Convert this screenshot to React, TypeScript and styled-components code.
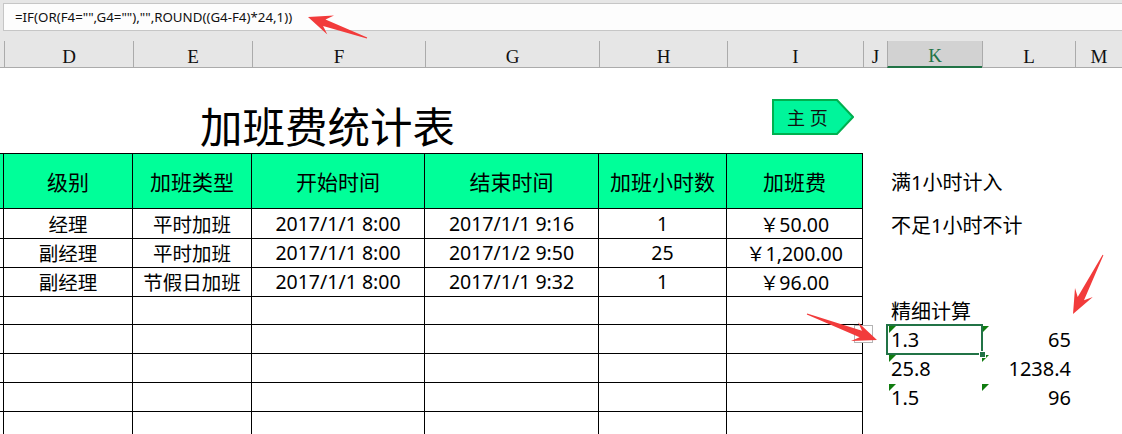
import styled, { createGlobalStyle, css } from 'styled-components';

// C ... M columns, widths taken from the sheet
const COLS = '4px 129px 119px 173px 174px 128px 136px 24px 95px 93px 1fr';

interface OvertimeRow {
  level: string;
  kind: string;
  start: string;
  end: string;
  hours: string;
  pay: string;
}

interface SideRow {
  k?: string;
  l?: string;
  flag?: boolean;
  selected?: boolean;
}

const rows: OvertimeRow[] = [
  { level: '经理', kind: '平时加班', start: '2017/1/1 8:00', end: '2017/1/1 9:16', hours: '1', pay: '￥50.00' },
  { level: '副经理', kind: '平时加班', start: '2017/1/1 8:00', end: '2017/1/2 9:50', hours: '25', pay: '￥1,200.00' },
  { level: '副经理', kind: '节假日加班', start: '2017/1/1 8:00', end: '2017/1/1 9:32', hours: '1', pay: '￥96.00' },
  { level: '', kind: '', start: '', end: '', hours: '', pay: '' },
  { level: '', kind: '', start: '', end: '', hours: '', pay: '' },
  { level: '', kind: '', start: '', end: '', hours: '', pay: '' },
  { level: '', kind: '', start: '', end: '', hours: '', pay: '' },
  { level: '', kind: '', start: '', end: '', hours: '', pay: '' },
];

// notes to the right of the table, one per data row
const side: SideRow[] = [
  { k: '不足1小时不计' },
  {},
  {},
  { k: '精细计算' },
  { k: '1.3', l: '65', flag: true, selected: true },
  { k: '25.8', l: '1238.4', flag: true },
  { k: '1.5', l: '96', flag: true },
  {},
];

const headers = ['级别', '加班类型', '开始时间', '结束时间', '加班小时数', '加班费'];
const letters = ['D', 'E', 'F', 'G', 'H', 'I', 'J', 'K', 'L', 'M'];

const GlobalStyle = createGlobalStyle`
  html, body {
    margin: 0;
    padding: 0;
    background: #fff;
  }
  body {
    font-family: "Noto Sans", "Noto Sans CJK SC", sans-serif;
    color: #000;
    overflow: hidden;
  }
`;

const Page = styled.div`
  position: relative;
  width: 1122px;
  height: 434px;
  overflow: hidden;
  background: #fff;
`;

const FormulaBar = styled.div`
  height: 31px;
  box-sizing: border-box;
  padding: 3px 0 0 3px;
  background: #e6e6e6;
`;

const FormulaInput = styled.div`
  height: 28px;
  box-sizing: border-box;
  display: flex;
  align-items: center;
  padding-left: 11px;
  background: #fdfdfd;
  border: 1px solid #c6c6c6;
  border-right: none;
  font-size: 13.3px;
  color: #111;
  white-space: nowrap;
`;

const ColumnHeads = styled.div`
  display: grid;
  grid-template-columns: ${COLS};
  height: 37px;
  box-sizing: border-box;
  padding-top: 10px;
  background: #e6e6e6;
  border-bottom: 1px solid #ababab;
`;

const ColHead = styled.div<{ $active?: boolean }>`
  display: flex;
  align-items: center;
  justify-content: center;
  box-sizing: border-box;
  padding-top: 5px;
  border-left: 1px solid #ababab;
  font-family: "Liberation Serif", serif;
  font-size: 19px;
  color: #111;
  overflow: hidden;
  ${p => p.$active && css`
    background: #d2d2d2;
    color: #217346;
    border-bottom: 2px solid #217346;
    margin-bottom: -1px;
  `}
`;

const SheetRow = styled.div<{ $h: number }>`
  display: grid;
  grid-template-columns: ${COLS};
  height: ${p => p.$h}px;
`;

const Title = styled.h1`
  grid-column: 2 / 7;
  margin: 0;
  padding: 35px 0 0 196px;
  font-family: "Noto Sans CJK SC", sans-serif;
  font-weight: 400;
  font-size: 42.5px;
  line-height: 43px;
  white-space: nowrap;
`;

const HomeButton = styled.button`
  grid-column: 7;
  position: relative;
  align-self: start;
  display: flex;
  align-items: center;
  width: 82px;
  height: 36px;
  margin: 31px 0 0 45px;
  padding: 0 0 0 15px;
  border: none;
  background: none;
  font-family: "Noto Sans", "Noto Sans CJK SC", sans-serif;
  font-size: 18px;
  color: #111;
  cursor: pointer;

  svg {
    position: absolute;
    inset: 0;
  }
  span {
    position: relative;
  }
`;

const TableCell = styled.div<{ $head?: boolean; $first?: boolean }>`
  display: flex;
  align-items: center;
  justify-content: center;
  box-sizing: border-box;
  border-right: 1px solid #000;
  border-bottom: 1px solid #000;
  white-space: nowrap;
  ${p => p.$first && 'border-left: 1px solid #000;'}
  ${p => p.$head
    ? css`
      background: #00ff99;
      border-top: 1px solid #000;
      font-size: 21px;
    `
    : css`
      font-size: 19.5px;
    `}
`;

const SideCell = styled.div<{ $right?: boolean; $flag?: boolean; $selected?: boolean }>`
  position: relative;
  display: flex;
  align-items: center;
  justify-content: ${p => (p.$right ? 'flex-end' : 'flex-start')};
  box-sizing: border-box;
  padding: 0 4px;
  font-size: 20px;
  white-space: nowrap;

  ${p => p.$flag && css`
    &::before {
      content: '';
      position: absolute;
      top: 1px;
      left: ${p.$right ? 0 : 2}px;
      border-top: 7px solid #107c10;
      border-right: 7px solid transparent;
    }
  `}

  ${p => p.$selected && css`
    z-index: 1;
    outline: 2px solid #217346;
    outline-offset: -1px;

    &::after {
      content: '';
      position: absolute;
      right: -4px;
      bottom: -4px;
      width: 5px;
      height: 5px;
      background: #217346;
      border: 1px solid #fff;
    }
  `}
`;

// the little paste-options tag Excel leaves beside the cell
const SmartTag = styled.div`
  position: absolute;
  left: 854px;
  top: 325px;
  width: 19px;
  height: 18px;
  box-sizing: border-box;
  border: 1px solid #b4b4b4;
  background: #fff;

  &::after {
    content: '';
    position: absolute;
    left: 8px;
    top: 8px;
    border-top: 5px solid #f4a460;
    border-left: 3px solid transparent;
    border-right: 3px solid transparent;
  }
`;

const Overlay = styled.svg`
  position: absolute;
  left: 0;
  top: 0;
  pointer-events: none;
`;

function arrowPoints(tx: number, ty: number, hx: number, hy: number, headLen = 24, headW = 20, neckW = 7, tailW = 1) {
  const dx = hx - tx;
  const dy = hy - ty;
  const len = Math.hypot(dx, dy);
  const ux = dx / len;
  const uy = dy / len;
  const px = -uy;
  const py = ux;
  const nx = hx - ux * headLen * 0.72;
  const ny = hy - uy * headLen * 0.72;
  const wx = hx - ux * headLen;
  const wy = hy - uy * headLen;
  const pts = [
    [tx + px * tailW / 2, ty + py * tailW / 2],
    [nx + px * neckW / 2, ny + py * neckW / 2],
    [wx + px * headW / 2, wy + py * headW / 2],
    [hx, hy],
    [wx - px * headW / 2, wy - py * headW / 2],
    [nx - px * neckW / 2, ny - py * neckW / 2],
    [tx - px * tailW / 2, ty - py * tailW / 2],
  ];
  return pts.map(([x, y]) => `${x.toFixed(1)},${y.toFixed(1)}`).join(' ');
}

export default function App() {
  return (
    <Page>
      <GlobalStyle />
      <FormulaBar>
        <FormulaInput>=IF(OR(F4="",G4=""),"",ROUND((G4-F4)*24,1))</FormulaInput>
      </FormulaBar>

      <ColumnHeads>
        <div />
        {letters.map(l => (
          <ColHead key={l} $active={l === 'K'}>{l}</ColHead>
        ))}
      </ColumnHeads>

      <SheetRow $h={85}>
        <div />
        <Title>加班费统计表</Title>
        <HomeButton>
          <svg width="82" height="36" viewBox="0 0 82 36">
            <polygon points="1,1 65,1 81,18 65,35 1,35" fill="#00f59b" stroke="#00b050" strokeWidth="2" />
          </svg>
          <span>主 页</span>
        </HomeButton>
      </SheetRow>

      <SheetRow $h={56}>
        <TableCell $head />
        {headers.map(h => (
          <TableCell key={h} $head>{h}</TableCell>
        ))}
        <div />
        <SideCell>满1小时计入</SideCell>
        <div />
        <div />
      </SheetRow>

      {rows.map((r, i) => {
        const s = side[i];
        return (
          <SheetRow key={i} $h={29}>
            <TableCell />
            <TableCell>{r.level}</TableCell>
            <TableCell>{r.kind}</TableCell>
            <TableCell>{r.start}</TableCell>
            <TableCell>{r.end}</TableCell>
            <TableCell>{r.hours}</TableCell>
            <TableCell>{r.pay}</TableCell>
            <div />
            <SideCell $flag={s.flag} $selected={s.selected}>{s.k}</SideCell>
            <SideCell $right $flag={s.flag}>{s.l}</SideCell>
            <div />
          </SheetRow>
        );
      })}

      <SmartTag />

      <Overlay width="1122" height="434" viewBox="0 0 1122 434">
        <polygon points={arrowPoints(367, 38, 308, 17)} fill="#f23b3b" />
        <polygon points={arrowPoints(807, 314, 877, 340)} fill="#f23b3b" />
        <polygon points={arrowPoints(1103, 255, 1073, 314)} fill="#f23b3b" />
      </Overlay>
    </Page>
  );
}
